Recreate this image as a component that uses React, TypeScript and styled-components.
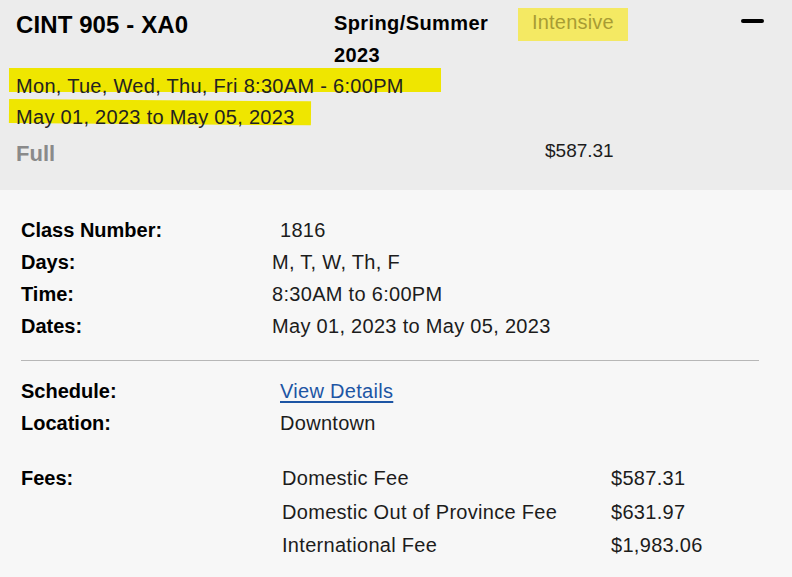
import styled, { createGlobalStyle } from "styled-components";

const GlobalStyle = createGlobalStyle`
  html, body {
    margin: 0;
    padding: 0;
    background: #f7f7f7;
  }
  body {
    font-family: "Liberation Sans", Arial, sans-serif;
    color: #1c1c1c;
  }
`;

interface Fee {
  name: string;
  amount: string;
}

const fees: Fee[] = [
  { name: "Domestic Fee", amount: "$587.31" },
  { name: "Domestic Out of Province Fee", amount: "$631.97" },
  { name: "International Fee", amount: "$1,983.06" },
];

export default function App() {
  return (
    <>
      <GlobalStyle />
      <Card>
        <Header>
          <TopRow>
            <Title>CINT 905 - XA0</Title>
            <Term>Spring/Summer 2023</Term>
            <Badge>Intensive</Badge>
            <Collapse aria-label="Collapse" />
          </TopRow>
          <Line>
            <Marker $over={37}>Mon, Tue, Wed, Thu, Fri 8:30AM - 6:00PM</Marker>
          </Line>
          <Line>
            <Marker $over={16} $tilt={0.45}>
              May 01, 2023 to May 05, 2023
            </Marker>
          </Line>
          <StatusRow>
            <Status>Full</Status>
            <Price>$587.31</Price>
          </StatusRow>
        </Header>

        <Body>
          <InfoGrid $labelWidth={251}>
            <Label>Class Number:</Label>
            <Value $indent={8}>1816</Value>
            <Label>Days:</Label>
            <Value>M, T, W, Th, F</Value>
            <Label>Time:</Label>
            <Value>8:30AM to 6:00PM</Value>
            <Label>Dates:</Label>
            <Value>May 01, 2023 to May 05, 2023</Value>
          </InfoGrid>

          <Divider />

          <InfoGrid $labelWidth={259}>
            <Label>Schedule:</Label>
            <Value>
              <Link href="#">View Details</Link>
            </Value>
            <Label>Location:</Label>
            <Value>Downtown</Value>
          </InfoGrid>

          <FeeSection>
            <FeeLabel>Fees:</FeeLabel>
            <FeeTable>
              {fees.map((f) => (
                <FeeRow key={f.name}>
                  <span>{f.name}</span>
                  <span>{f.amount}</span>
                </FeeRow>
              ))}
            </FeeTable>
          </FeeSection>
        </Body>
      </Card>
    </>
  );
}

const Card = styled.section`
  width: 792px;
  min-height: 577px;
  background: #f7f7f7;
`;

const Header = styled.header`
  box-sizing: border-box;
  height: 190px;
  padding: 7px 28px 0 16px;
  background: #ececec;
`;

const TopRow = styled.div`
  display: grid;
  grid-template-columns: 318px 184px 1fr auto;
  align-items: start;
`;

const Title = styled.h2`
  margin: 2px 0 0;
  font-size: 24px;
  line-height: 32px;
  font-weight: 700;
  letter-spacing: 0.1px;
  color: #000;
`;

const Term = styled.div`
  width: 180px;
  font-size: 20px;
  line-height: 32px;
  font-weight: 700;
  letter-spacing: 0.4px;
  color: #000;
`;

const Badge = styled.span`
  justify-self: start;
  margin-top: 1px;
  padding: 0 14px 5px;
  background: #f4e963;
  color: #a89c34;
  font-size: 20px;
  line-height: 28px;
  letter-spacing: 0.2px;
`;

const Collapse = styled.button`
  width: 23px;
  height: 4px;
  margin-top: 12px;
  padding: 0;
  border: none;
  border-radius: 2px;
  background: #000;
  cursor: pointer;
`;

const Line = styled.div`
  font-size: 20px;
  line-height: 31px;
  letter-spacing: 0.3px;
  color: #222;
`;

const Marker = styled.span<{ $over: number; $tilt?: number }>`
  position: relative;
  z-index: 0;
  &::before {
    content: "";
    position: absolute;
    z-index: -1;
    left: -7px;
    right: ${(p) => -p.$over}px;
    top: -7px;
    height: 24px;
    background: #efe600;
    transform: rotate(${(p) => p.$tilt ?? 0}deg);
    transform-origin: left center;
  }
`;

const StatusRow = styled.div`
  display: grid;
  grid-template-columns: 529px auto;
  align-items: start;
  margin-top: 4px;
`;

const Status = styled.span`
  padding-top: 3px;
  font-size: 22px;
  line-height: 28px;
  font-weight: 700;
  color: #8a8a8a;
`;

const Price = styled.span`
  font-size: 19px;
  line-height: 28px;
  color: #1c1c1c;
`;

const Body = styled.div`
  padding: 24px 33px 20px 21px;
`;

const InfoGrid = styled.div<{ $labelWidth: number }>`
  display: grid;
  grid-template-columns: ${(p) => p.$labelWidth}px 1fr;
  grid-auto-rows: 32px;
  line-height: 32px;
`;

const Label = styled.span`
  font-size: 20px;
  font-weight: 700;
  color: #000;
`;

const Value = styled.span<{ $indent?: number }>`
  padding-left: ${(p) => p.$indent ?? 0}px;
  font-size: 20px;
  letter-spacing: 0.3px;
  color: #1c1c1c;
`;

const Link = styled.a`
  color: #1d55a4;
  text-decoration: underline;
  text-decoration-thickness: 2px;
  text-underline-offset: 3px;
`;

const Divider = styled.hr`
  margin: 18px 0 14px;
  height: 0;
  border: none;
  border-top: 1px solid #b7b7b7;
`;

const FeeSection = styled.div`
  display: grid;
  grid-template-columns: 261px 1fr;
  margin-top: 23px;
  line-height: 33.5px;
`;

const FeeLabel = styled(Label)``;

const FeeTable = styled.div`
  display: flex;
  flex-direction: column;
`;

const FeeRow = styled.div`
  display: grid;
  grid-template-columns: 329px auto;
  font-size: 20px;
  letter-spacing: 0.3px;
  color: #1c1c1c;
`;
